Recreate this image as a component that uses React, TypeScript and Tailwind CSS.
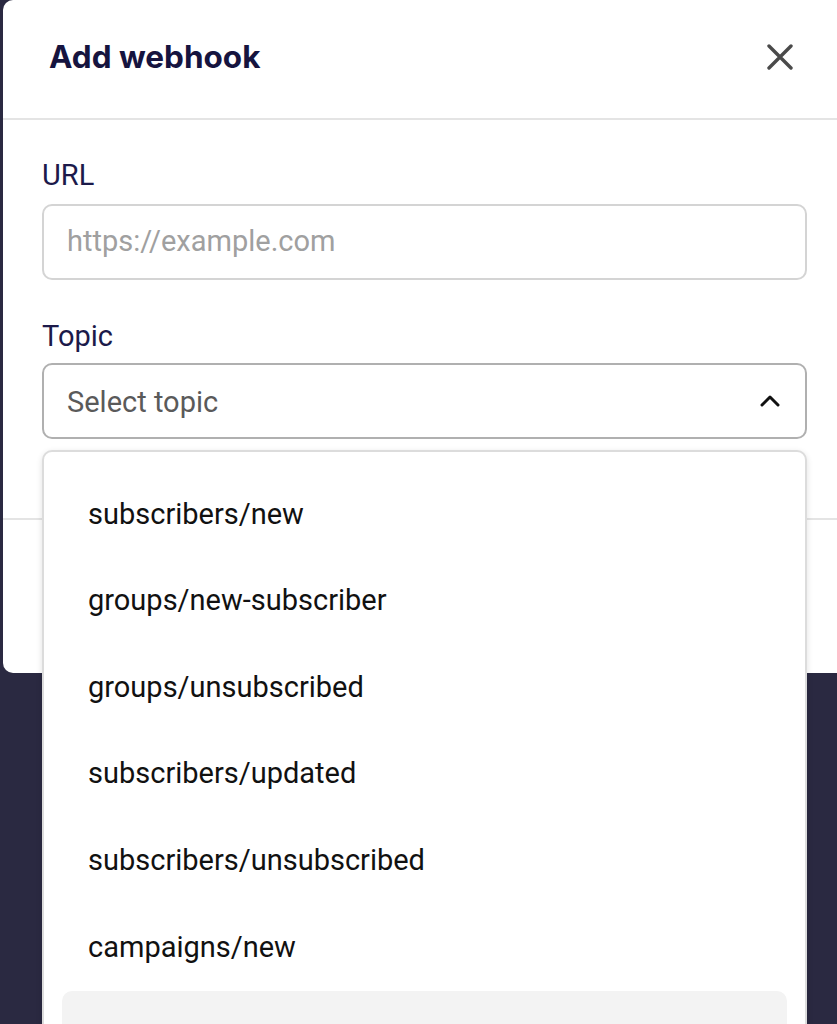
const topics = [
  'subscribers/new',
  'groups/new-subscriber',
  'groups/unsubscribed',
  'subscribers/updated',
  'subscribers/unsubscribed',
  'campaigns/new',
  'groups/new',
]

export default function App() {
  return (
    <div className="h-[1024px] w-full overflow-hidden bg-[#2a2941] pl-[3px] font-['Roboto',sans-serif]">
      <div className="relative flex h-[673px] w-[842px] flex-col rounded-l-[10px] bg-white">
        <div className="flex h-[120px] shrink-0 items-center justify-between border-b-2 border-[#e4e4e4] pl-[46px] pr-[52px]">
          <h2 className="pb-[4px] font-['Inter',sans-serif] text-[31.5px] font-bold text-[#16143f]">Add webhook</h2>
          <button className="mt-[-4px] text-[#4a4a4a]">
            <svg width="26" height="26" viewBox="0 0 26 26" fill="none" stroke="currentColor" strokeWidth="3.4" strokeLinecap="round">
              <path d="M2 2L24 24M24 2L2 24" />
            </svg>
          </button>
        </div>

        <div className="flex h-[400px] shrink-0 flex-col border-b-2 border-[#e4e4e4] pl-[39px] pr-[38px] pt-[38px]">
          <label className="mb-[12px] text-[29px] leading-[34px] text-[#1c1a4a]">URL</label>
          <div className="flex h-[76px] items-center rounded-[10px] border-2 border-[#d4d4d4] px-[23px] text-[29px] text-[#a0a0a0]">
            https://example.com
          </div>

          <label className="mb-[10px] mt-[39px] text-[29px] leading-[34px] text-[#1c1a4a]">Topic</label>
          <div className="relative">
            <div className="flex h-[76px] items-center justify-between rounded-[10px] border-2 border-[#b0b0b0] pl-[23px] pr-[25px] text-[29px] text-[#5a5a5a]">
              <span className="pt-[4px]">Select topic</span>
              <svg width="20" height="12" viewBox="0 0 20 12" fill="none" stroke="#111" strokeWidth="3" strokeLinecap="round" strokeLinejoin="round">
                <path d="M2 10L10 2L18 10" />
              </svg>
            </div>

            <div className="absolute left-0 right-0 top-[87px] z-10 h-[600px] rounded-[10px] border-2 border-[#dcdcdc] bg-white px-[18px] pt-[19px] shadow-[0_2px_6px_rgba(0,0,0,0.12)]">
              {topics.map((t, i) => (
                <div
                  key={t}
                  className={
                    i === 6
                      ? 'flex h-[86.6px] items-center rounded-[10px] bg-[#f3f3f3] pl-[26px] pt-[3px] text-[29px] text-[#111]'
                      : 'flex h-[86.6px] items-center rounded-[10px] pl-[26px] text-[29px] text-[#111]'
                  }
                >
                  {t}
                </div>
              ))}
            </div>
          </div>
        </div>
      </div>
    </div>
  )
}
